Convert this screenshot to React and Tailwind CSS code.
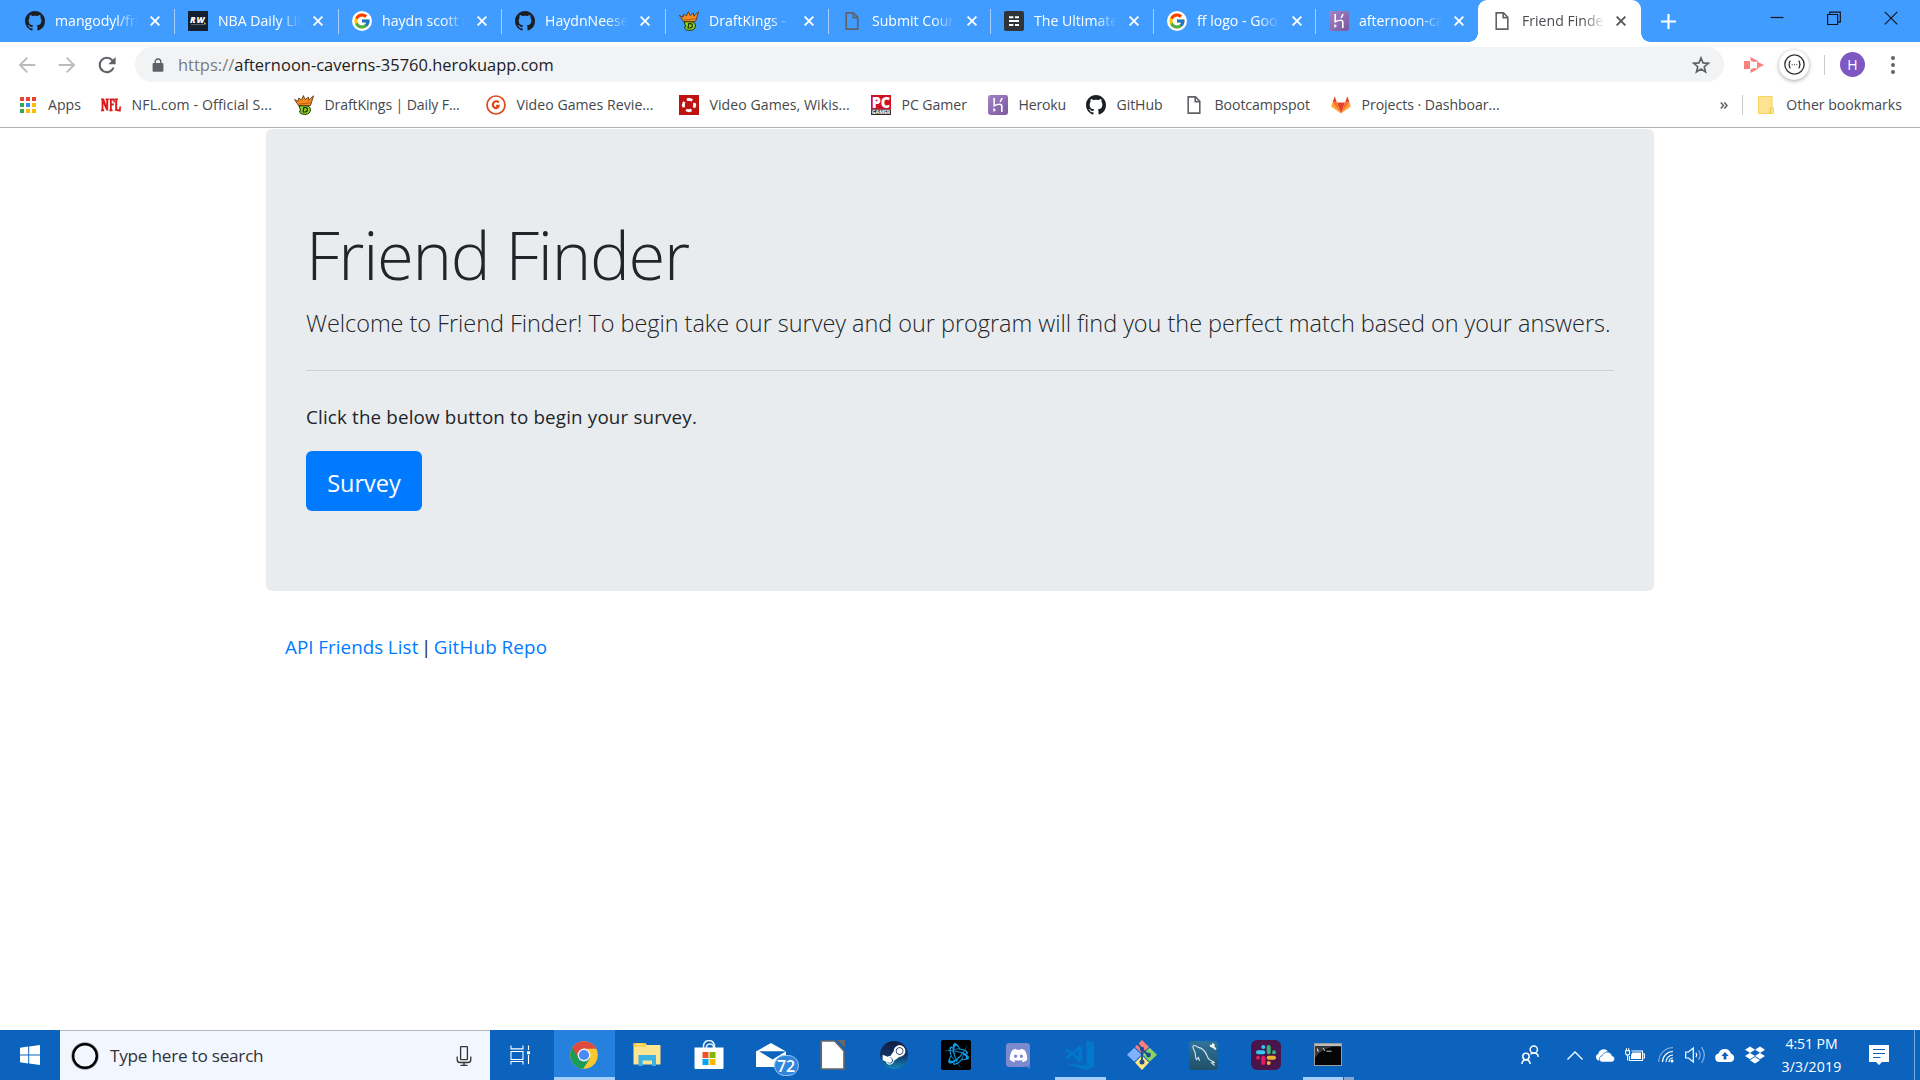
import { BsGithub } from "react-icons/bs";
import { FaBattleNet, FaDiscord, FaDropbox, FaSteamSymbol } from "react-icons/fa";
import { FcGoogle } from "react-icons/fc";

/* ---------- favicons ---------- */

function GitHub() {
  return <BsGithub className="size-5 text-[#1b1f23]" />;
}

function RotoWire() {
  return (
    <svg viewBox="0 0 20 20" className="size-5">
      <rect width="20" height="20" fill="#14202f" />
      <text x="2" y="12.2" fontFamily="Open Sans, sans-serif" fontSize="8.6" fontWeight="800" fontStyle="italic" fill="#fff" textLength="14.5">RW</text>
      <path d="M3 13.6h13.5" stroke="#7d8791" strokeWidth="0.7" />
      <path d="M16.2 11.2l1.6 1-.6 1.6-1-.6z" fill="#e8d44a" />
    </svg>
  );
}

function Google() {
  return (
    <span className="flex size-5 items-center justify-center rounded-full bg-white">
      <FcGoogle className="size-[18px]" />
    </span>
  );
}

function DraftKings() {
  return (
    <svg viewBox="0 0 20 20" className="size-5">
      <path d="M.4 4.400l3.600 1.800.8-3.200 2.600 2L9.400.6l1.800 4 3.200-2.600.4 3.200L19.600.8l-3 9.600-11.400 1z" fill="#f58a1f" stroke="#4b3213" strokeWidth=".8" strokeLinejoin="round" />
      <path d="M4.800 9.200l12-1.400" stroke="#a3570f" strokeWidth="0.800" />
      <path d="M5 10.800h6.800c3.200 0 4.600 1.600 4.600 4 0 2.900-2 4.600-5.600 4.600-3.200 0-5-1-5.400-3.200l1.400-.4z" fill="#8fd422" stroke="#22300c" strokeWidth="1" />
      <path d="M9.800 12.600h1.600c1.400 0 2 .7 2 2s-.8 2.400-2.300 2.400H9z" fill="none" stroke="#22300c" strokeWidth="1.200" />
    </svg>
  );
}

function FileIcon() {
  return (
    <svg viewBox="0 0 20 20" className="size-5" fill="none" stroke="#5f6368" strokeWidth="1.6">
      <path d="M4.2 1.9h7.3l4.3 4.4v11.8H4.2z" />
      <path d="M11.2 2v4.6h4.5" />
    </svg>
  );
}

function TheUltimate() {
  return (
    <svg viewBox="0 0 20 20" className="size-5">
      <rect width="20" height="20" rx="2" fill="#303338" />
      <path d="M5 6.200h4.400M11 6.200h4M5 10h10M5 13.900h4.400M11 13.900h4" stroke="#fff" strokeWidth="2" />
    </svg>
  );
}

function Heroku() {
  return (
    <svg viewBox="0 0 20 20" className="size-5">
      <defs>
        <linearGradient id="heroku" x1="0" y1="0" x2="1" y2="1">
          <stop offset="0" stopColor="#a583c6" />
          <stop offset="1" stopColor="#79589f" />
        </linearGradient>
      </defs>
      <rect width="20" height="20" rx="2.4" fill="url(#heroku)" />
      <path d="M6.200 3v7.800c2-1 3.800-1.500 5.400-1.500 1.700 0 2.200.9 2.200 2.200V17" fill="none" stroke="#fff" strokeWidth="1.600" />
      <path d="M13.900 3c-.2 1.400-.8 2.600-1.900 3.800" fill="none" stroke="#fff" strokeWidth="1.600" />
      <path d="M5.400 12.800L8 14.900l-2.600 2.100z" fill="#fff" />
    </svg>
  );
}

function AppsGrid() {
  const colors = ["#ea4335", "#ea4335", "#ea4335", "#34a853", "#4285f4", "#fbbc05", "#34a853", "#fbbc05", "#fbbc05"];
  return (
    <span className="grid size-4 grid-cols-3 gap-[2px]">
      {colors.map((c, i) => (
        <span key={i} style={{ backgroundColor: c }} />
      ))}
    </span>
  );
}

function Nfl() {
  return (
    <svg viewBox="0 0 20 20" className="size-5">
      <path
        d="M0 3.4h3l2.2 6.4V5.2l-.8-.4V3.4h3.4v1.4l-.6.4v10.2H5.4L2.4 9v5.2l.8.4v1.6H0v-1.6l.6-.4V5.2L0 4.8zM8.4 3.4h5.4v4h-1.2l-.4-2h-1.4v3.2h2v1.8h-2v3.8l.8.4v1.6H8.4v-1.6l.6-.4V5.2l-.6-.4zM14 3.4h3v1.4l-.8.4v9h1.800l.6-3 1.400.4-.4 5.200-6.200-1.400.8-1V5.200l-.2-.4z"
        fill="#e11b1b"
      />
    </svg>
  );
}

function GameSpotG() {
  return (
    <svg viewBox="0 0 20 20" className="size-5" fill="none" stroke="#e04a1b">
      <circle cx="10" cy="10" r="9" strokeWidth="1.7" />
      <path d="M12.9 7.4c-1.6-1.7-4.200-1.500-5.300.2-1 1.600-.8 3.800.6 4.900 1.500 1.100 3.900.7 4.400-1.700h-2.500" strokeWidth="2.200" />
    </svg>
  );
}

function Ign() {
  return (
    <svg viewBox="0 0 20 20" className="size-5">
      <rect width="20" height="20" fill="#bf1313" />
      <circle cx="10" cy="10" r="5.600" fill="none" stroke="#fff" strokeWidth="2.600" strokeDasharray="5.600 3.196" strokeDashoffset="2.800" />
      <path d="M10 2.500L12.400 5.600H7.600zM10 17.500L12.400 14.400H7.600zM2.500 10L5.600 7.600v4.800zM17.500 10L14.400 7.600v4.800z" fill="#fff" />
      <path d="M10 7.400v5.200M7.400 10h5.200" stroke="#bf1313" strokeWidth="1.600" />
    </svg>
  );
}

function PcGamer() {
  return (
    <svg viewBox="0 0 20 20" className="size-5">
      <rect width="20" height="14.500" fill="#cf1126" />
      <rect y="14.500" width="20" height="5.500" fill="#2a2a2a" />
      <text x="0.800" y="12.800" fontFamily="Open Sans, sans-serif" fontSize="15.500" fontWeight="800" fill="#fff" textLength="18.400" lengthAdjust="spacingAndGlyphs">PC</text>
      <text x="0.700" y="19.300" fontFamily="Open Sans, sans-serif" fontSize="5.600" fontWeight="800" fill="#e8e8e8" textLength="18.600" lengthAdjust="spacingAndGlyphs">GAMER</text>
    </svg>
  );
}

function GitLab() {
  return (
    <svg viewBox="0 0 20 20" className="size-5">
      <path d="M3.700 1.200L1.500 7.600h4.400zM16.300 1.200l2.200 6.400h-4.400z" fill="#e24329" />
      <path d="M10 18.600L5.900 7.600h8.200z" fill="#e24329" />
      <path d="M10 18.600L1.500 7.600h4.400zM10 18.600l8.500-11h-4.400z" fill="#fc6d26" />
      <path d="M10 18.600L.3 11.600l1.200-4zM10 18.600l9.700-7-1.200-4z" fill="#fca326" />
    </svg>
  );
}

/* ---------- browser chrome ---------- */

const tabs = [
  { title: "mangodyl/fri", icon: <GitHub />, width: "w-[163px]" },
  { title: "NBA Daily Lin", icon: <RotoWire />, width: "w-[164px]" },
  { title: "haydn scott n", icon: <Google />, width: "w-[163px]" },
  { title: "HaydnNeese", icon: <GitHub />, width: "w-[164px]" },
  { title: "DraftKings - ", icon: <DraftKings />, width: "w-[163px]" },
  { title: "Submit Cour", icon: <FileIcon />, width: "w-[162px]" },
  { title: "The Ultimate", icon: <TheUltimate />, width: "w-[163px]" },
  { title: "ff logo - Goo", icon: <Google />, width: "w-[162px]" },
  { title: "afternoon-ca", icon: <Heroku />, width: "w-[162px]", last: true },
];

function CloseMark({ className }) {
  return (
    <svg viewBox="0 0 10 10" className={`size-[10px] shrink-0 ${className}`} stroke="currentColor" strokeWidth="1.9">
      <path d="M.6.6l8.800 8.800M9.400.6L.6 9.400" />
    </svg>
  );
}

function TabBody({ icon, title, closeClass }) {
  return (
    <>
      <span className="shrink-0">{icon}</span>
      <span className="ml-[10px] w-[85px] overflow-hidden whitespace-nowrap [mask-image:linear-gradient(to_right,#000_72%,transparent_98%)]">
        {title}
      </span>
      <CloseMark className={closeClass} />
    </>
  );
}

function TabStrip() {
  return (
    <div className="flex h-[42px] bg-[#409cff] pl-3 text-[14.100px] text-white">
      {tabs.map((t) => (
        <div key={t.title} className={`relative flex shrink-0 items-center pl-[13px] ${t.width}`}>
          <TabBody icon={t.icon} title={t.title} closeClass="ml-[10px] text-white" />
          {!t.last && <span className="absolute top-[9px] right-0 h-[25px] w-[1.500px] bg-[#a6d0ff]" />}
        </div>
      ))}
      <div className="relative flex w-[163px] shrink-0 items-center rounded-t-[9px] bg-white pl-[14px] text-[#4a4d51]">
        <span className="absolute bottom-0 -left-[9px] size-[9px] bg-[radial-gradient(circle_at_0_0,#409cff_8.500px,#fff_9px)]" />
        <TabBody icon={<FileIcon />} title="Friend Finde" closeClass="ml-[9px] text-[#55585c]" />
        <span className="absolute -right-[9px] bottom-0 size-[9px] bg-[radial-gradient(circle_at_100%_0,#409cff_8.500px,#fff_9px)]" />
      </div>
      <svg viewBox="0 0 14 14" className="mt-[14px] ml-[20px] size-[15px]" stroke="#fff" strokeWidth="2">
        <path d="M7 0v14M0 7h14" />
      </svg>
      <div className="mt-[11px] mr-[22px] ml-auto flex h-[14px] gap-[43px]">
        <svg viewBox="0 0 14 14" className="size-[14px]" stroke="#10151c" strokeWidth="1.200">
          <path d="M.5 6.500h13" />
        </svg>
        <svg viewBox="0 0 14 14" className="size-[14px]" fill="none" stroke="#10151c" strokeWidth="1.200">
          <path d="M.6 3.500h10v10h-10zM2.800 3.500V1.100h10.500v10h-2.500" />
        </svg>
        <svg viewBox="0 0 14 14" className="size-[14px]" stroke="#10151c" strokeWidth="1.200">
          <path d="M.8.8l12.500 12.500M13.300.8L.8 13.300" />
        </svg>
      </div>
    </div>
  );
}

function Toolbar() {
  return (
    <div className="flex h-[45px] items-center bg-white pl-[18px]">
      <svg viewBox="0 0 18 18" className="size-[18px]" fill="none" stroke="#babcbe" strokeWidth="1.900">
        <path d="M17.300 9H2.200M9.300 1.700L2 9l7.300 7.300" />
      </svg>
      <svg viewBox="0 0 18 18" className="ml-[22px] size-[18px]" fill="none" stroke="#babcbe" strokeWidth="1.900">
        <path d="M.7 9h15.100M8.700 1.700L16 9l-7.300 7.300" />
      </svg>
      <svg viewBox="0 0 18 18" className="ml-[22px] size-[18px]" fill="none" stroke="#5f6368" strokeWidth="2.100">
        <path d="M15.600 11.500A7.200 7.200 0 1 1 14.300 4.200L16 6" />
        <path d="M17.600.9v7.300h-7.300z" fill="#5f6368" stroke="none" />
      </svg>
      <div className="ml-[19px] flex h-[35px] w-[1589px] items-center rounded-full bg-[#f1f3f4] pr-[14px] pl-[17px]">
        <svg viewBox="0 0 12 14" className="h-[14px] w-[12px]">
          <path d="M3.200 6V3.800a2.800 2.800 0 0 1 5.600 0V6" fill="none" stroke="#5f6368" strokeWidth="1.400" />
          <rect x=".6" y="5" width="10.800" height="8.800" rx="1" fill="#5f6368" />
        </svg>
        <span className="ml-[14px] pt-[2px] text-[16.450px] tracking-[0.025px] text-[#202124]">
          <span className="text-[#777b80]">https://</span>afternoon-caverns-35760.herokuapp.com
        </span>
        <svg viewBox="0 0 18 18" className="ml-auto size-[18px]" fill="none" stroke="#5f6368" strokeWidth="1.700">
          <path d="M9 2l2 4.900 5.200.4-4 3.400 1.300 5.200L9 13.100l-4.500 2.800 1.300-5.200-4-3.400L7 6.900z" />
        </svg>
      </div>
      <svg viewBox="0 0 20 16" className="ml-[20px] h-4 w-5" fill="#fb8080">
        <path d="M0 4h6v8H0zM6.500 0l8 4.300-5 .7-3-1.500zM6.500 16l8-4.300-5-.7-3 1.500zM13 4.500L20 8l-7 3.500z" />
      </svg>
      <span className="ml-[15px] flex size-[30px] items-center justify-center rounded-full bg-white shadow-[0_1px_4px_rgba(0,0,0,0.35)]">
        <svg viewBox="0 0 20 20" className="size-[21px]" fill="none" stroke="#333">
          <circle cx="10" cy="10" r="9.200" strokeWidth="1.300" />
          <path d="M6.300 6.800c-1.300 0-1.100.8-1.100 1.700S4.800 10 4.200 10c.6 0 1 .6 1 1.500s-.2 1.700 1.100 1.700M13.700 6.800c1.300 0 1.100.8 1.100 1.700s.4 1.500 1 1.500c-.6 0-1 .6-1 1.500s.2 1.700-1.100 1.700" strokeWidth="1.200" />
          <path d="M7.300 10.200h1M9.500 10.200h1M11.700 10.200h1" strokeWidth="1" />
        </svg>
      </span>
      <span className="ml-[15px] h-5 w-px bg-[#c8cacd]" />
      <span className="ml-[15px] flex size-[25px] items-center justify-center rounded-full bg-[#7e57c2] text-[14px] text-white">H</span>
      <span className="ml-[26px] flex flex-col gap-[3px]">
        <span className="size-[4px] rounded-full bg-[#5f6368]" />
        <span className="size-[4px] rounded-full bg-[#5f6368]" />
        <span className="size-[4px] rounded-full bg-[#5f6368]" />
      </span>
    </div>
  );
}

const bookmarks = [
  { label: "NFL.com - Official S...", icon: <Nfl />, width: "w-[193px]", tracking: "tracking-[0.140px]" },
  { label: "DraftKings | Daily F...", icon: <DraftKings />, width: "w-[192px]", tracking: "tracking-[-0.130px]" },
  { label: "Video Games Revie...", icon: <GameSpotG />, width: "w-[193px]", tracking: "tracking-[0.040px]" },
  { label: "Video Games, Wikis...", icon: <Ign />, width: "w-[192px]", tracking: "tracking-[0.060px]" },
  { label: "PC Gamer", icon: <PcGamer />, width: "w-[117px]", tracking: "tracking-[-0.050px]" },
  { label: "Heroku", icon: <Heroku />, width: "w-[98px]", tracking: "tracking-[-0.200px]" },
  { label: "GitHub", icon: <GitHub />, width: "w-[98px]", tracking: "tracking-[-0.080px]" },
  { label: "Bootcampspot", icon: <FileIcon />, width: "w-[147px]", tracking: "tracking-[-0.060px]" },
  { label: "Projects · Dashboar...", icon: <GitLab />, width: "w-[180px]", tracking: "tracking-[-0.040px]" },
];

function BookmarksBar() {
  return (
    <div className="flex h-[41px] items-center border-b border-[#b1b3b1] bg-white pr-[18px] pb-[4px] pl-5 text-[14.100px] text-[#45484c]">
      <span className="flex w-[81px] items-center gap-3">
        <AppsGrid />
        Apps
      </span>
      {bookmarks.map((b) => (
        <span key={b.label} className={`flex shrink-0 items-center gap-[10.500px] whitespace-nowrap ${b.width} ${b.tracking}`}>
          {b.icon}
          {b.label}
        </span>
      ))}
      <svg viewBox="0 0 8 7" className="ml-auto h-[7px] w-2" fill="none" stroke="#5f6368" strokeWidth="1.500">
        <path d="M.8.400L3.500 3.500.8 6.600M4.300.400L7 3.500 4.300 6.600" />
      </svg>
      <span className="ml-[14px] h-5 w-px bg-[#c8cacd]" />
      <svg viewBox="0 0 16 18" className="ml-[15px] h-[18px] w-4">
        <path d="M.5.500h13.600v11.300h1.400v5.700H.5z" fill="#fde392" stroke="#f5d35e" />
        <path d="M12.200 17.500v-4.300c0-1 .6-1.400 1.900-1.400" fill="none" stroke="#e9bd33" />
      </svg>
      <span className="ml-[12px] whitespace-nowrap">Other bookmarks</span>
    </div>
  );
}

/* ---------- page ---------- */

function Page() {
  return (
    <main className="flex-1 bg-white px-[266px] pt-px text-xl text-[#212529]">
      <section className="h-[462px] rounded-[6px] bg-[#e9ecef] px-10 pt-[83px]">
        <h1 className="text-[67px] leading-[84px] font-light tracking-[-1.300px]">Friend Finder</h1>
        <p className="mt-[8px] text-[23.500px] leading-[38px] font-light tracking-[-0.045px] whitespace-nowrap">
          Welcome to Friend Finder! To begin take our survey and our program will find you the perfect match based on your answers.
        </p>
        <hr className="mt-[28px] border-[#ced1d4]" />
        <p className="mt-[31px] text-[18.800px] leading-[30px] tracking-[0.165px]">Click the below button to begin your survey.</p>
        <button className="mt-[19px] flex h-[60px] w-[116px] items-center justify-center rounded-[6px] bg-[#007bff] pt-[4px] text-[23.500px] text-white">
          Survey
        </button>
      </section>
      <footer className="mt-[41px] ml-[19px] text-[18.800px] leading-[30px] [word-spacing:-0.500px]">
        <a className="tracking-[0.090px] text-[#007bff]">API Friends List</a>
        <span className="mx-[2.200px] inline-block w-[11px] text-center">|</span>
        <a className="tracking-[0.204px] text-[#007bff]">GitHub Repo</a>
      </footer>
    </main>
  );
}

/* ---------- taskbar icons ---------- */

function Chrome() {
  return (
    <svg viewBox="0 0 28 28" className="size-7">
      <circle cx="14" cy="14" r="13.800" fill="#fbc832" />
      <path d="M14 14L2.050 7.100A13.800 13.800 0 0 0 13.200 27.800L20 17.500z" fill="#1a9b58" />
      <path d="M2.050 7.100A13.800 13.800 0 0 1 26.200 7.700H14L8.600 17z" fill="#dc4b3e" />
      <circle cx="14" cy="14" r="6.500" fill="#f1f1f1" />
      <circle cx="14" cy="14" r="5.100" fill="#4a8af4" />
    </svg>
  );
}

function Explorer() {
  return (
    <svg viewBox="0 0 28 24" className="h-6 w-7">
      <path d="M.5 1.200c0-.7.500-1.200 1.200-1.200h10.600l1.500 2h12.700c.7 0 1 .4 1 1v18.500H.5z" fill="#fde592" />
      <path d="M.5 1.200c0-.7.500-1.200 1.200-1.200h10.600v3.600H.5z" fill="#f9c731" />
      <path d="M3 1.500h7" stroke="#fff0b0" strokeWidth="1" />
      <path d="M5.500 12h17.500v11h-4v-5.500H9.600V23H5.500z" fill="#3bb4e5" />
    </svg>
  );
}

function Store() {
  return (
    <svg viewBox="0 0 30 30" className="size-[30px]">
      <path d="M9.500 8V6a5.500 5.500 0 0 1 11 0v2M12.500 8V6a4 4 0 0 1 7 0v2" fill="none" stroke="#e5effa" strokeWidth="1.500" />
      <path d="M.5 7.500h29V28a1 1 0 0 1-1 1h-27a1 1 0 0 1-1-1z" fill="#fff" />
      <path d="M8.500 12h6v6h-6z" fill="#f25022" />
      <path d="M15.500 12h6v6h-6z" fill="#7fba00" />
      <path d="M8.500 19h6v6h-6z" fill="#00a4ef" />
      <path d="M15.500 19h6v6h-6z" fill="#ffb900" />
    </svg>
  );
}

function Mail() {
  return (
    <span className="relative flex">
      <svg viewBox="0 0 30 24" className="h-6 w-[30px]">
        <path d="M15 0l15 8.500V24H0V8.500z" fill="#fff" />
        <path d="M3 8.200h27L16.500 16.500z" fill="#0b63be" />
        <path d="M0 8.500l16 7.800L9 18z" fill="#fff" />
      </svg>
      <span className="absolute top-[12px] left-[18px] flex h-[21px] w-[25px] items-center justify-center rounded-full border border-[#9cc7f5] bg-[#2f86dc] text-[16px] font-semibold text-white">
        72
      </span>
    </span>
  );
}

function LibreOffice() {
  return (
    <svg viewBox="0 0 26 30" className="h-[30px] w-[26px]">
      <path d="M1.200 1h13.500l9.300 10v18H1.200z" fill="#fff" stroke="#656769" strokeWidth="1.700" />
      <path d="M17 0h8v8z" fill="#656769" />
    </svg>
  );
}

function Steam() {
  return (
    <span className="flex size-7 items-center justify-center overflow-hidden rounded-full bg-linear-to-b from-[#111d40] via-[#123463] to-[#1287b8]">
      <FaSteamSymbol className="size-[26px] text-white" />
    </span>
  );
}

function BattleNet() {
  return (
    <span className="flex size-[30px] items-center justify-center rounded-[2px] bg-black">
      <FaBattleNet className="size-[25px] text-[#0c9be6]" />
    </span>
  );
}

function Discord() {
  return (
    <span className="relative flex size-6 items-center justify-center rounded-[3px] bg-[#7b89cf]">
      <FaDiscord className="size-[19px] text-white" />
      <svg viewBox="0 0 6 6" className="absolute right-0 -bottom-[2px] size-[6px]">
        <path d="M0 3h6v3z" fill="#6777bd" />
      </svg>
    </span>
  );
}

function VsCode() {
  return (
    <svg viewBox="0 0 30 30" className="size-[30px]" fill="#0079cc">
      <path d="M21.500 0L29 3v23.500L21.500 30 1 23.500l20.500 2z" />
      <path d="M2 8.500l5.300 4L14 6l3.200 1.500v13L14 22l-6.700-6.500L2 19.500 0 18l4.300-4L0 10zM13.500 10.200L9.200 14l4.300 3.800z" fillRule="evenodd" />
    </svg>
  );
}

function GitBash() {
  return (
    <svg viewBox="0 0 30 30" className="size-[30px]">
      <path d="M15 0l7 7-7 7-7-7z" fill="#f97f7f" />
      <path d="M7.300 7.700l7 7-7 7L0 14.700z" fill="#80b3ff" />
      <path d="M22.700 7.700L30 14.700l-7.300 7-7-7z" fill="#8dd35f" />
      <path d="M15 15.500l7 7-7 7.500-7-7.500z" fill="#ffe680" />
      <path d="M10.500 3.500L15 9v13M15 9l6 6" stroke="#1c4f8f" strokeWidth="1.800" fill="none" />
      <circle cx="15" cy="9" r="2.200" fill="#1c4f8f" />
      <circle cx="15" cy="22" r="2.500" fill="#1c4f8f" />
      <circle cx="21.500" cy="15" r="2.400" fill="#1c4f8f" />
    </svg>
  );
}

function MySql() {
  return (
    <svg viewBox="0 0 29 29" className="size-[29px]">
      <defs>
        <linearGradient id="workbench" x1="0" y1="0" x2="0" y2="1">
          <stop offset="0" stopColor="#30739a" />
          <stop offset="1" stopColor="#205068" />
        </linearGradient>
      </defs>
      <rect width="29" height="29" rx="3" fill="url(#workbench)" />
      <path d="M10.500 19.800l-1-3.300-2 2.200C6 16.500 6.800 13.500 6 11.200 5 8.800 3.300 6.800 4 5.200c.8-1.500 3.500-.2 5 1.200 4.500.6 7.200 4 8.700 7.600.9 2.300 1.300 4.200 3.300 5.100 1.800.8 3.300 1.300 4.300 2.400l-2.800.2 3 2.800" fill="none" stroke="#d8e6ee" strokeWidth="1.100" />
      <path d="M20.500 3.500l2 .8.800-2.300 2.400 1.300-.4 2 2.200 2.400-1.200 1.300-2.500-2.300-2.500-.6z" fill="#fff" />
    </svg>
  );
}

function Slack() {
  return (
    <svg viewBox="0 0 30 30" className="size-[30px]">
      <rect width="30" height="30" rx="6" fill="#4a154b" />
      <g strokeWidth="4" strokeLinecap="round" fill="none">
        <path d="M12.300 6.900v.01M7 12.300h5.300" stroke="#36c5f0" />
        <path d="M17.700 7v5.300M23 12.300v.01" stroke="#2eb67d" />
        <path d="M17.700 17.700H23M17.700 23v.01" stroke="#ecb22e" />
        <path d="M12.300 17.700V23M7 17.700v.01" stroke="#e01e5a" />
      </g>
    </svg>
  );
}

function Terminal() {
  return (
    <svg viewBox="0 0 28 24" className="h-6 w-7">
      <rect x=".5" y=".5" width="27" height="22" fill="#050505" stroke="#9b9b9b" />
      <path d="M1 1h26v2.200H1z" fill="#b9bbbd" />
      <path d="M1 3.200h20C12 5 4 9 1 15z" fill="#3a3a3a" />
      <path d="M3.500 5.500v2.500h1.500M7 5.500v.01M7 8v.01M9 5l2 3M12.500 8.200h5" stroke="#e4e4e4" strokeWidth=".9" fill="none" />
    </svg>
  );
}

const apps = [
  { id: "chrome", icon: <Chrome /> },
  { id: "explorer", icon: <Explorer /> },
  { id: "store", icon: <Store /> },
  { id: "mail", icon: <Mail /> },
  { id: "libreoffice", icon: <LibreOffice /> },
  { id: "steam", icon: <Steam /> },
  { id: "battlenet", icon: <BattleNet /> },
  { id: "discord", icon: <Discord /> },
  { id: "vscode", icon: <VsCode />, running: true },
  { id: "git", icon: <GitBash /> },
  { id: "mysql", icon: <MySql /> },
  { id: "slack", icon: <Slack /> },
  { id: "terminal", icon: <Terminal />, stacked: true },
];

function Tray() {
  return (
    <div className="ml-auto flex items-center text-white">
      <svg viewBox="0 0 18 20" className="h-5 w-[18px]" fill="none" stroke="#fff" strokeWidth="1.500">
        <circle cx="12.800" cy="4.500" r="3.600" />
        <circle cx="5" cy="11.500" r="3.200" />
        <path d="M.8 19c.4-2.800 2-4.300 4.200-4.300S8.800 16.200 9.200 19M9.500 9.300c.8-.8 1.900-1.200 3.300-1.200 2.400 0 4.200 1.300 4.500 3.700" />
      </svg>
      <svg viewBox="0 0 16 9" className="ml-[28px] h-[9px] w-4" fill="none" stroke="#fff" strokeWidth="1.300">
        <path d="M.5 8.500L8 1l7.500 7.500" />
      </svg>
      <svg viewBox="0 0 20 13" className="ml-[12px] h-[13px] w-5" fill="#fff">
        <path d="M4 11.500a3.300 3.300 0 0 1-.8-6.400A5.600 5.600 0 0 1 13 2.300c-3 .2-4.800 1.800-5.300 4C5.500 6.500 4 8.500 4 11.500z" />
        <path d="M7.500 13a3 3 0 0 1-.5-6 5.200 5.200 0 0 1 10-.3 3.200 3.200 0 0 1 0 6.300z" stroke="#0b63be" strokeWidth=".5" />
      </svg>
      <svg viewBox="0 0 20 14" className="ml-[10px] h-[14px] w-5" fill="none" stroke="#fff" strokeWidth="1.100">
        <path d="M6.500 3h11v9.500h-13V8M17.500 6h1.900v4h-1.900M.6 2.800h4v2.200a2 2 0 0 1-4 0zM1.500 .3v2.500M3.700 .3v2.500M2.600 7v5.500" />
        <path d="M6 6.500L7.500 4.500h8.500v6.500H6z" fill="#fff" stroke="none" />
      </svg>
      <svg viewBox="0 0 16 16" className="ml-[13px] size-4" fill="none" stroke="#fff" strokeWidth="1.200">
        <path d="M.7 15A14.300 14.300 0 0 1 15 .7" opacity=".45" />
        <path d="M4.500 15A10.500 10.500 0 0 1 15 4.500M8 15a7 7 0 0 1 7-7M11 15a4 4 0 0 1 4-4" />
        <circle cx="14" cy="14" r="1.500" fill="#fff" stroke="none" />
      </svg>
      <svg viewBox="0 0 21 18" className="ml-[11px] h-[18px] w-[21px]" fill="none" stroke="#fff" strokeWidth="1.200">
        <path d="M.7 6h2.800l4.800-4v14l-4.800-4H.7z" />
        <path d="M11 6.800c.8 1.300.8 3.100 0 4.400" />
        <path d="M13.500 4.300c2 2.900 2 6.500 0 9.400M16.500 1.200c3.500 4.800 3.500 10.800 0 15.600" opacity=".5" />
      </svg>
      <svg viewBox="0 0 20 14" className="ml-[9px] h-[14px] w-5">
        <path d="M4.500 14A4.300 4.300 0 0 1 3.600 5.500 6.500 6.500 0 0 1 16 5.800 4.200 4.200 0 0 1 15.700 14z" fill="#fff" />
        <path d="M10 4l3.700 4h-2.300v3.500H8.600V8H6.300z" fill="#0b63be" />
      </svg>
      <FaDropbox className="ml-[10px] size-5" />
      <div className="flex w-[93px] flex-col items-center text-[14.100px] leading-[23px]">
        <span className="tracking-[-0.100px]">4:51 PM</span>
        <span className="tracking-[0.160px]">3/3/2019</span>
      </div>
      <svg viewBox="0 0 20 20" className="ml-[11px] size-5">
        <path d="M0 0h20v17h-7l-3 3-3-3H0z" fill="#fff" />
        <path d="M4 4.500h12M4 8.500h12M4 12.500h7.500" stroke="#0b63be" strokeWidth="1.200" />
      </svg>
      <span className="ml-[25px] h-[50px] w-px bg-[#78aade]" />
      <span className="w-[5px]" />
    </div>
  );
}

function Taskbar() {
  return (
    <div className="flex h-[50px] bg-[#0b63be]">
      <div className="flex w-[60px] items-center justify-center">
        <svg viewBox="0 0 20 20" className="size-5" fill="#fff">
          <path d="M0 2.800l8.200-1.200v7.900H0zM9.200 1.400L20 0v9.500H9.200zM0 10.500h8.200v7.900L0 17.200zM9.200 10.500H20V20L9.200 18.600z" />
        </svg>
      </div>
      <div className="flex w-[430px] items-center border-t border-[#b6b9be] bg-[#f2f6fe] pr-[18px] pl-[11px]">
        <svg viewBox="0 0 28 28" className="size-7" fill="none">
          <circle cx="14" cy="14" r="12.900" stroke="#8b8d91" strokeWidth="1.600" />
          <circle cx="14" cy="14" r="11.800" stroke="#000" strokeWidth="2.400" />
        </svg>
        <span className="ml-[11px] text-[17.200px] tracking-[-0.250px] text-[#303236]">Type here to search</span>
        <svg viewBox="0 0 16 20" className="ml-auto h-5 w-4" fill="none" stroke="#333" strokeWidth="1.300">
          <rect x="4.600" y=".7" width="6.800" height="13" rx=".6" />
          <path d="M1.200 10.500v3.200c0 1.500 1 2.800 2.800 2.800h8c1.800 0 2.800-1.300 2.800-2.800v-3.200M8 16.500v2.800M4.500 19.300h7" />
        </svg>
      </div>
      <div className="flex w-[64px] items-center pl-5">
        <svg viewBox="0 0 20 20" className="size-5" fill="none" stroke="#fff" strokeWidth="1.100">
          <path d="M1 .5v3.400h12V.5M1 6.500h12v8H1zM1 19.500v-3h12v3M18.500 .5v4.500M18.500 10v9" />
          <path d="M17 6.300h3v3h-3z" fill="#fff" stroke="none" />
        </svg>
      </div>
      {apps.map((a) => (
        <div
          key={a.id}
          className={`relative flex w-[61.900px] shrink-0 items-center justify-center ${a.id === "chrome" ? "border-r border-[#0b63be] bg-[#2681de]" : ""}`}
        >
          {a.icon}
          {a.id === "chrome" && <span className="absolute inset-x-0 bottom-0 h-[3px] bg-[#a5cffb]" />}
          {a.running && <span className="absolute bottom-0 left-[6px] h-[3px] w-[51px] bg-[#a5cffb]" />}
          {a.stacked && (
            <span className="absolute bottom-0 left-[6px] flex h-[3px] w-[51px]">
              <span className="mr-px w-10 bg-[#a5cffb]" />
              <span className="flex-1 bg-[#83a5cf]" />
            </span>
          )}
        </div>
      ))}
      <Tray />
    </div>
  );
}

export default function App() {
  return (
    <div className="flex h-[1080px] w-[1920px] flex-col overflow-hidden bg-white font-['Open_Sans','Noto_Sans',sans-serif]">
      <TabStrip />
      <Toolbar />
      <BookmarksBar />
      <Page />
      <Taskbar />
    </div>
  );
}
